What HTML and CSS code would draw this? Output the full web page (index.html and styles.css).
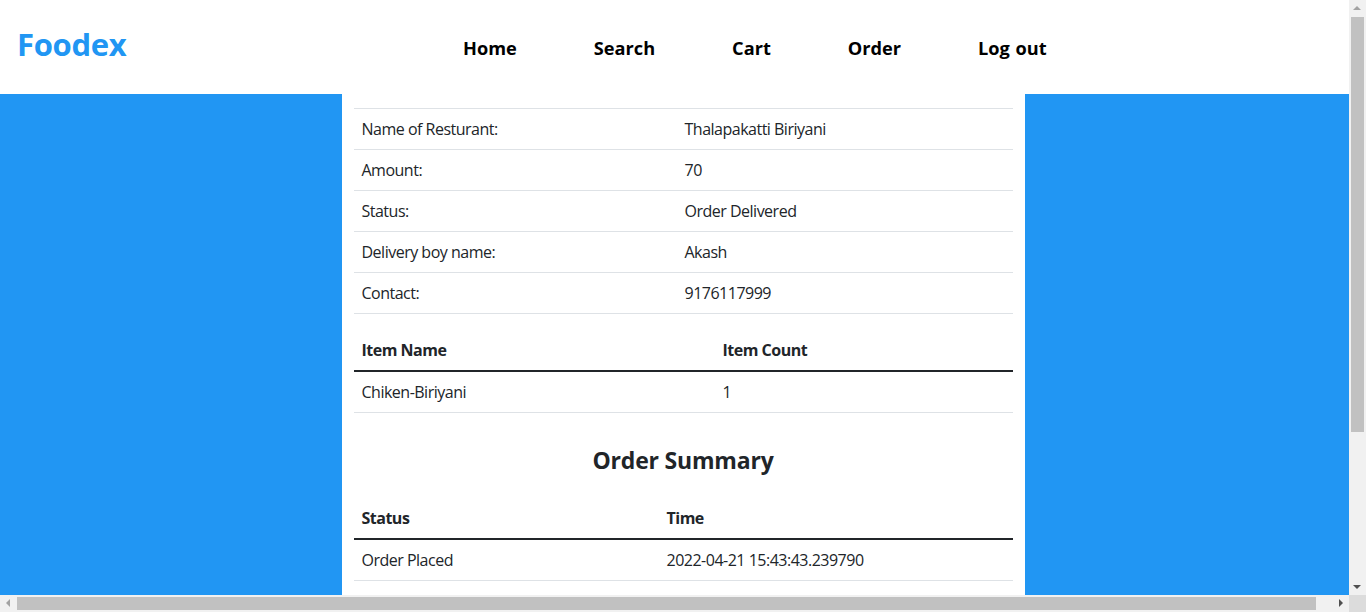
FILE: index.html
```html
<!DOCTYPE html>
<html lang="en">
<head>
<meta charset="utf-8">
<title>Foodex - Order</title>
<link rel="stylesheet" href="styles.css">
</head>
<body>
<header class="topbar">
  <div class="brand">Foodex</div>
  <nav class="nav">
    <a href="#">Home</a>
    <a href="#">Search</a>
    <a href="#">Cart</a>
    <a href="#">Order</a>
    <a href="#">Log out</a>
  </nav>
</header>
<main class="page">
  <section class="card">
    <table class="tbl info">
      <colgroup><col class="c-info"><col></colgroup>
      <tbody>
        <tr><td>Name of Resturant:</td><td>Thalapakatti Biriyani</td></tr>
        <tr><td>Amount:</td><td>70</td></tr>
        <tr><td>Status:</td><td>Order Delivered</td></tr>
        <tr><td>Delivery boy name:</td><td>Akash</td></tr>
        <tr><td>Contact:</td><td>9176117999</td></tr>
      </tbody>
    </table>
    <table class="tbl items">
      <colgroup><col class="c-items"><col></colgroup>
      <thead><tr><th>Item Name</th><th>Item Count</th></tr></thead>
      <tbody>
        <tr><td>Chiken-Biriyani</td><td>1</td></tr>
      </tbody>
    </table>
    <h3 class="summary-title">Order Summary</h3>
    <table class="tbl summary">
      <colgroup><col class="c-summary"><col></colgroup>
      <thead><tr><th>Status</th><th>Time</th></tr></thead>
      <tbody>
        <tr><td>Order Placed</td><td>2022-04-21 15:43:43.239790</td></tr>
        <tr><td>Order Accepted</td><td>2022-04-21 15:44:10.512304</td></tr>
        <tr><td>Out for Delivery</td><td>2022-04-21 15:58:27.104866</td></tr>
        <tr><td>Order Delivered</td><td>2022-04-21 16:20:05.771203</td></tr>
      </tbody>
    </table>
  </section>
</main>

<div class="sb-v" aria-hidden="true">
  <span class="arr arr-up"></span>
  <span class="sb-v-thumb"></span>
  <span class="arr arr-down"></span>
</div>
<div class="sb-h" aria-hidden="true">
  <span class="arr arr-left"></span>
  <span class="sb-h-thumb"></span>
  <span class="arr arr-right"></span>
</div>
<div class="sb-corner" aria-hidden="true"></div>
</body>
</html>
```
FILE: styles.css
```css
* { box-sizing: border-box; }

html, body {
  margin: 0;
  padding: 0;
}

body {
  font-family: "Open Sans", "Noto Sans", sans-serif;
  font-size: 16px;
  line-height: 24px;
  color: #212529;
  background: #ffffff;
  width: 100vw;
}

.topbar {
  height: 94px;
  display: flex;
  align-items: center;
  background: #ffffff;
}

.brand {
  width: 463px;
  padding-left: 17px;
  padding-bottom: 6px;
  font-size: 31px;
  font-weight: 700;
  color: #2196f3;
  letter-spacing: -0.3px;
}

.nav {
  display: flex;
  gap: 77px;
  padding-top: 2px;
}

.nav a {
  color: #000000;
  font-weight: 700;
  font-size: 18.2px;
  text-decoration: none;
  word-spacing: 1px;
}

.page {
  background: #2196f3;
  width: 100vw;
}

.card {
  width: 50%;
  margin: 0 auto;
  background: #ffffff;
  padding: 14px 12px 26px;
}

.tbl {
  width: 100%;
  border-collapse: collapse;
  margin-bottom: 16px;
  table-layout: fixed;
  letter-spacing: -0.5px;
}

.tbl td, .tbl th {
  padding: 8px;
  text-align: left;
  border-bottom: 1px solid #dee2e6;
  vertical-align: top;
}

.tbl th {
  font-weight: 700;
  border-bottom: 2px solid #212529;
}

.info { border-top: 1px solid #dee2e6; }

.c-info { width: 323px; }
.c-items { width: 361px; }
.c-summary { width: 305px; }

.summary-title {
  margin: 31px 0 22px;
  text-align: center;
  font-size: 23px;
  line-height: 32px;
  font-weight: 700;
  letter-spacing: -0.2px;
}

/* Rendered scrollbars (overlay, as in the captured window) */
.sb-v {
  position: fixed;
  top: 0;
  right: 0;
  width: 17px;
  height: calc(100vh - 17px);
  background: #f1f1f1;
}

.sb-v-thumb {
  position: absolute;
  left: 2px;
  right: 2px;
  top: 17px;
  height: 415px;
  background: #c1c1c1;
}

.sb-h {
  position: fixed;
  left: 0;
  bottom: 0;
  width: calc(100vw - 17px);
  height: 17px;
  background: #f1f1f1;
}

.sb-h-thumb {
  position: absolute;
  top: 2px;
  bottom: 2px;
  left: 17px;
  width: 1299px;
  background: #c1c1c1;
}

.sb-corner {
  position: fixed;
  right: 0;
  bottom: 0;
  width: 17px;
  height: 17px;
  background: #dcdcdc;
}

.arr {
  position: absolute;
  width: 0;
  height: 0;
  border-style: solid;
  border-color: transparent;
}

.arr-up {
  left: 4px;
  top: 6px;
  border-width: 0 4px 4px 4px;
  border-bottom-color: #a3a3a3;
}

.arr-down {
  left: 4px;
  bottom: 6px;
  border-width: 4px 4px 0 4px;
  border-top-color: #505050;
}

.arr-left {
  left: 6px;
  top: 4px;
  border-width: 4px 4px 4px 0;
  border-right-color: #a3a3a3;
}

.arr-right {
  right: 6px;
  top: 4px;
  border-width: 4px 0 4px 4px;
  border-left-color: #505050;
}
```
